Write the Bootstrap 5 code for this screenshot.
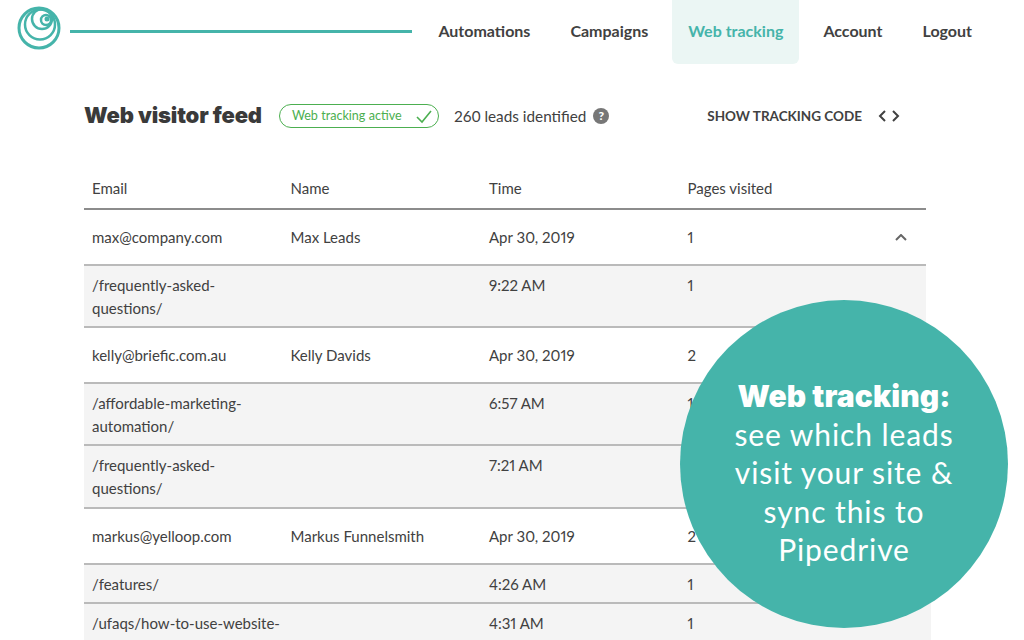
<!doctype html>
<html lang="en"><head><meta charset="utf-8">
<title>Web visitor feed</title>
<link href="https://cdn.jsdelivr.net/npm/bootstrap@5.3.0/dist/css/bootstrap.min.css" rel="stylesheet">
<style>
html,body{height:640px;overflow:hidden}
body{font-family:"Lato","Liberation Sans",sans-serif;color:#414141;background:#fff;position:relative}
.topbar{height:64px;padding-left:17px;padding-right:36px}
.brand-mark{margin-bottom:8px;flex:0 0 auto}
.rule{flex:0 0 auto;width:342px;height:3px;background:#45b4aa;margin-left:9px;margin-top:-2px}
.menu-link{display:block;height:64px;line-height:61px;padding:0 16px;margin-left:8px;font-weight:700;font-size:16px;color:#414141;text-decoration:none;border-radius:0 0 6px 6px}
.menu-link.current{background:#ebf6f4;color:#45b4aa}
.shell{margin:0 98px 0 84px}
.headline{height:102px;padding-top:2px}
.headline h1{font-family:"Inter","Lato",sans-serif;font-size:22px;font-weight:900;margin:0 0 1px;color:#3a3a3a;letter-spacing:-.17px;white-space:nowrap}
.status{border:1px solid #4caf50;border-radius:12px;color:#4caf50;font-size:12.6px;line-height:1;height:24px;width:160px;padding:1px 6px 0 12px;margin-left:17px;flex:0 0 auto}
.lead-count{font-size:15.3px;margin-left:15px}
.help{width:16px;height:16px;border-radius:50%;background:#777;color:#fff;font-size:12px;font-weight:900;line-height:16px;text-align:center;margin-left:7px}
.code-link{font-size:13.5px;font-weight:700;color:#414141;text-decoration:none;margin-left:auto;margin-right:26px}
.feed{margin:0;width:842px;table-layout:fixed;font-size:15px;line-height:23px;color:#414141;--bs-table-color:#414141;font-variant-numeric:proportional-nums}
.feed th{font-weight:400;padding:11px 8px 8px;border-bottom:2px solid #8c8c8c;width:198.5px}
.feed th:last-child{width:246.5px}
.feed td{padding:16px 8px 15px;border-bottom:2px solid #bababa;vertical-align:top}
.feed td:first-child{padding-right:0}
.feed tr.sub td{padding-top:8px;padding-bottom:6px;background:#f4f4f4;--bs-table-bg:#f4f4f4}
.feed tr.sub.roomy td{padding-bottom:7px}
.feed tr.final td:last-child{box-shadow:5px 0 0 #f4f4f4}
.bubble{position:absolute;left:680px;top:300px;width:328px;height:328px;border-radius:50%;background:#45b4aa;color:#fff;font-size:30px;letter-spacing:.9px;line-height:38.5px;padding-top:77px;text-align:center}
.bubble b{font-family:"Inter","Lato",sans-serif;font-size:30px;letter-spacing:.1px;font-weight:900;display:block;margin-bottom:-1px}
.fold{display:block;margin-left:auto;margin-right:11px;margin-top:8px}
</style></head><body>
<nav class="topbar d-flex align-items-center">
<svg class="brand-mark" width="44" height="44" viewBox="0 0 44 44" fill="none" stroke="#45b4aa" aria-label="logo"><circle cx="22" cy="22" r="20" stroke-width="3"/><circle cx="23" cy="18.500" r="15" stroke-width="2.500"/><circle cx="25" cy="13" r="10" stroke-width="2.500"/><circle cx="29" cy="14" r="5" stroke-width="2.500"/><circle cx="30" cy="13" r="2.500" fill="#45b4aa" stroke="none"/></svg>
<div class="rule"></div>
<div class="d-flex ms-auto">
<a class="menu-link" href="#">Automations</a><a class="menu-link" href="#">Campaigns</a><a class="menu-link current" href="#">Web tracking</a><a class="menu-link" href="#">Account</a><a class="menu-link" href="#">Logout</a>
</div>
</nav>
<main class="shell">
<div class="headline d-flex align-items-center">
<h1>Web visitor feed</h1>
<span class="status d-inline-flex align-items-center justify-content-between">Web tracking active<svg width="16" height="14" viewBox="0 0 16 14" fill="none" stroke="#4caf50" stroke-width="1.600"><path d="M1 7l5 5L15 1"/></svg></span>
<span class="lead-count">260 leads identified</span><span class="help">?</span>
<a class="code-link d-flex align-items-center" href="#">SHOW TRACKING CODE<svg class="ms-3" width="22" height="12" viewBox="0 0 22 12" fill="none" stroke="#414141" stroke-width="2"><path d="M7 1L2 6l5 5M15 1l5 5-5 5"/></svg></a>
</div>
<table class="table feed">
<thead><tr><th>Email</th><th>Name</th><th>Time</th><th>Pages visited</th></tr></thead>
<tbody>
<tr><td>max@company.com</td><td>Max Leads</td><td>Apr 30, 2019</td><td><div class="d-flex"><span>1</span><svg class="fold" width="12" height="7" viewBox="0 0 12 7" fill="none" stroke="#666" stroke-width="2"><path d="M1 6l5-5 5 5"/></svg></div></td></tr>
<tr class="sub"><td>/frequently-asked-questions/</td><td></td><td>9:22 AM</td><td>1</td></tr>
<tr><td>kelly@briefic.com.au</td><td>Kelly Davids</td><td>Apr 30, 2019</td><td>2</td></tr>
<tr class="sub"><td>/affordable-marketing-automation/</td><td></td><td>6:57 AM</td><td>1</td></tr>
<tr class="sub roomy"><td>/frequently-asked-questions/</td><td></td><td>7:21 AM</td><td>1</td></tr>
<tr><td>markus@yelloop.com</td><td>Markus Funnelsmith</td><td>Apr 30, 2019</td><td>2</td></tr>
<tr class="sub"><td>/features/</td><td></td><td>4:26 AM</td><td>1</td></tr>
<tr class="sub final"><td>/ufaqs/how-to-use-website-tracking/</td><td></td><td>4:31 AM</td><td>1</td></tr>
</tbody></table>
</main>
<aside class="bubble"><b>Web tracking:</b>see which leads<br>visit your site &amp;<br>sync this to<br>Pipedrive</aside>
<script src="https://cdn.jsdelivr.net/npm/bootstrap@5.3.0/dist/js/bootstrap.bundle.min.js"></script>
</body></html>
